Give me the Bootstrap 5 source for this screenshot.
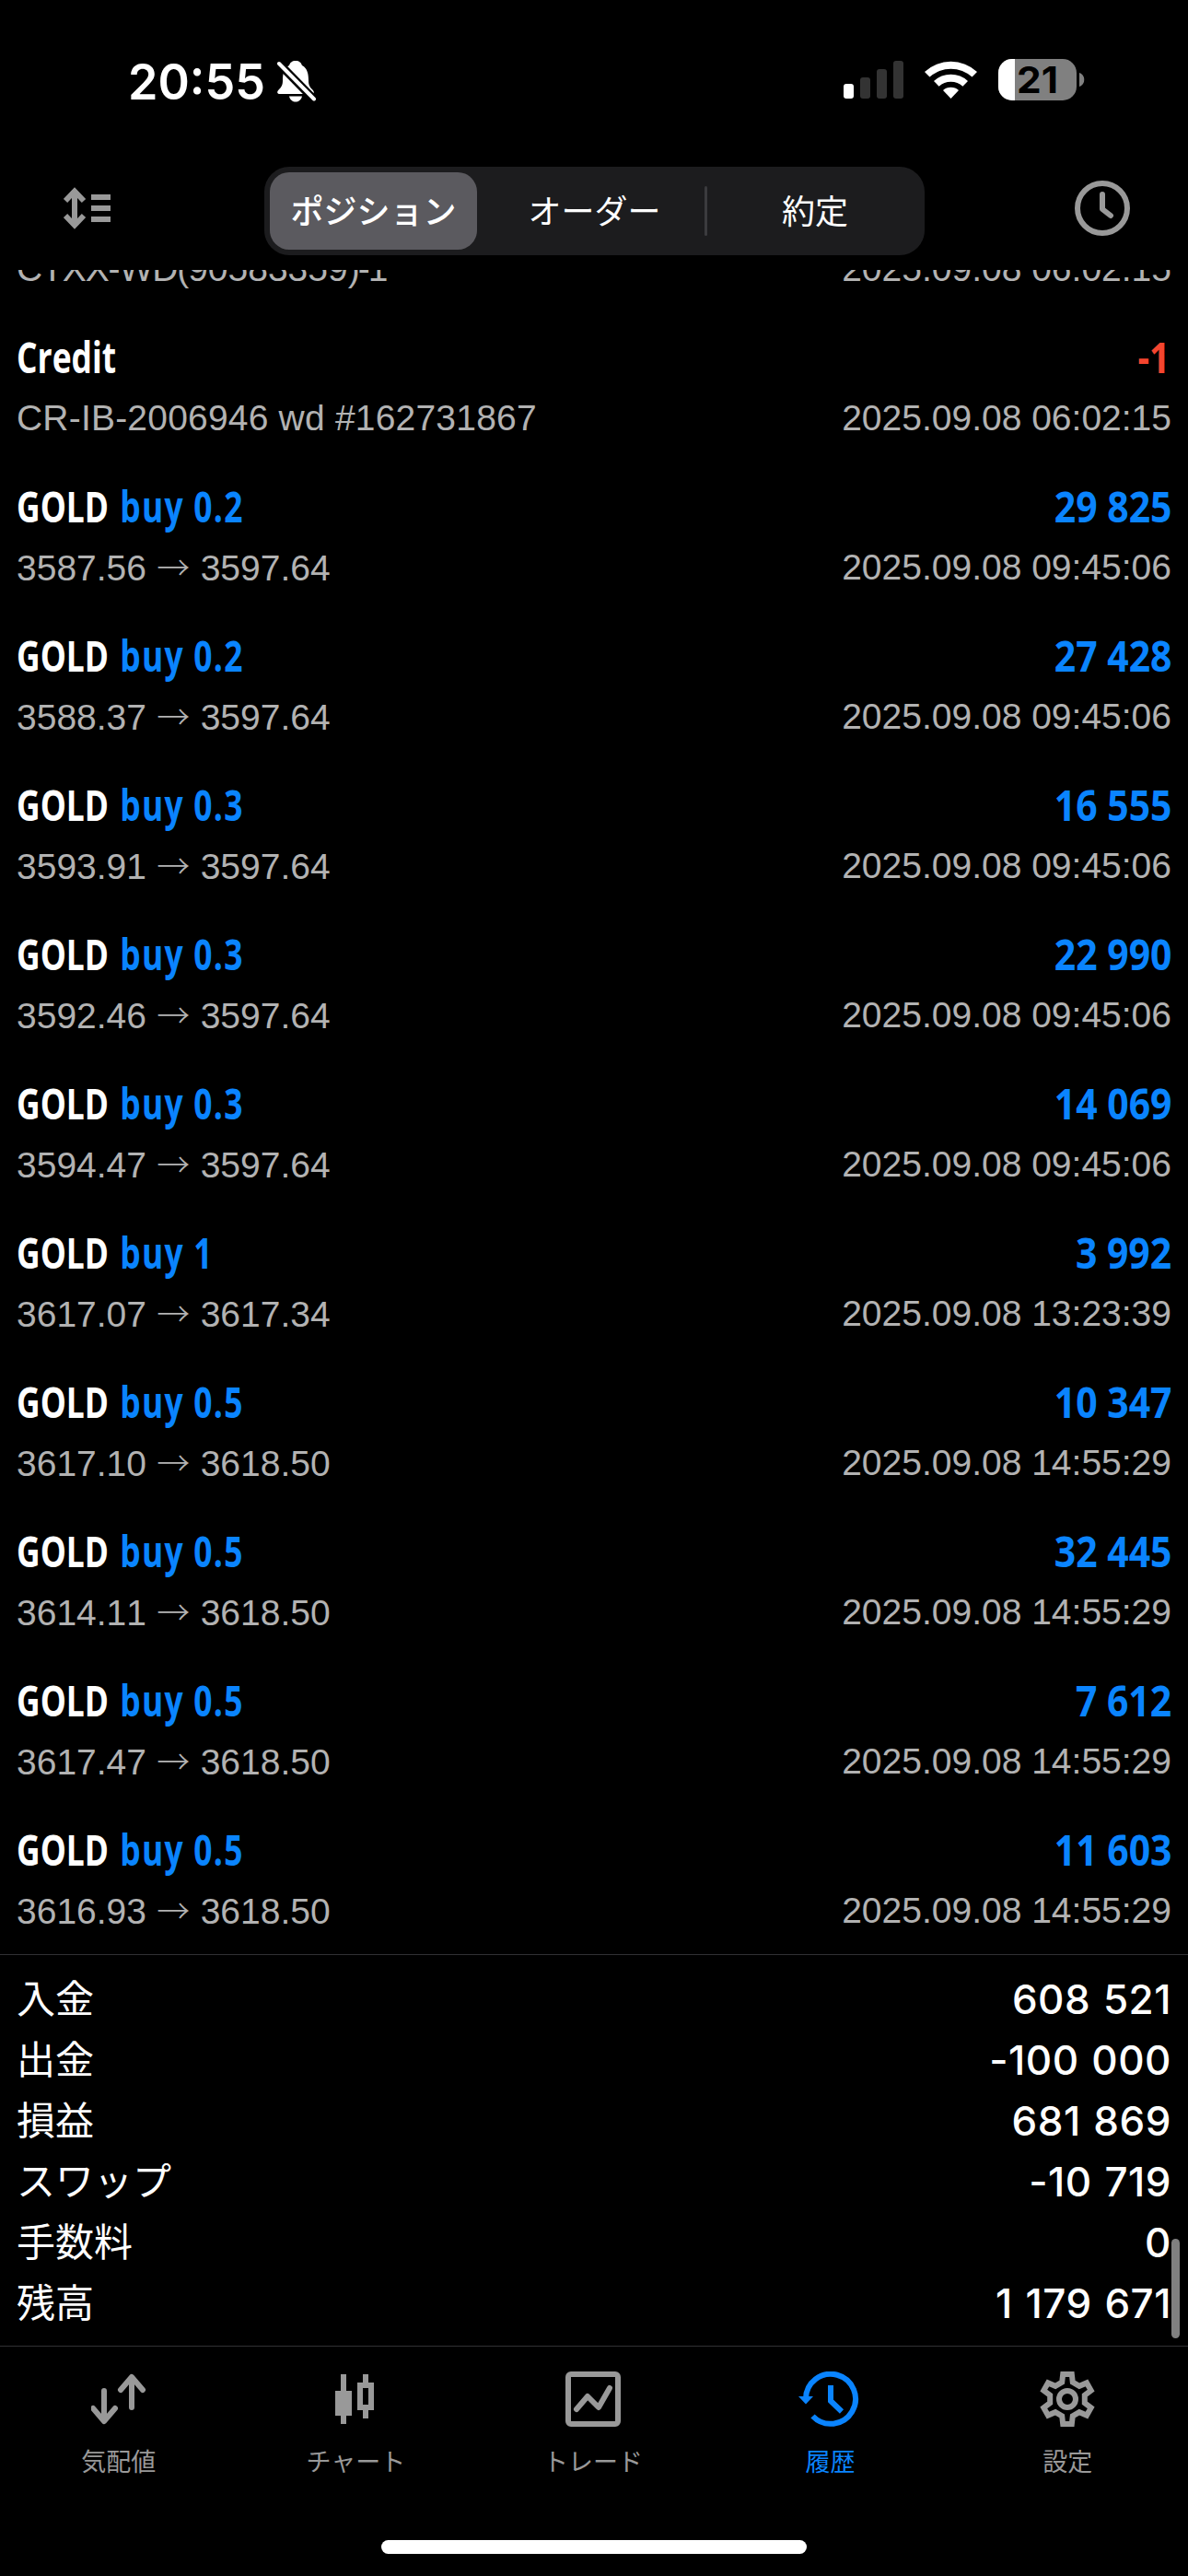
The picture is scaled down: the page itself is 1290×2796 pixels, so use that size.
<!DOCTYPE html>
<html lang="ja">
<head>
<meta charset="utf-8">
<meta name="viewport" content="width=device-width, initial-scale=1">
<title>履歴</title>
<link href="https://cdn.jsdelivr.net/npm/bootstrap@5.3.0/dist/css/bootstrap.min.css" rel="stylesheet">
<style>
  html, body { background: #000; }
  body { font-family: Inter, "Noto Sans CJK JP", sans-serif; color: #fff; line-height: 1; }
  svg { display: block; flex: none; }
  .screen { width: 1290px; height: 2796px; background: #000; overflow: hidden; }
  .status-bar { height: 181px; padding: 64px 112px 0 139px; }
  .clock-text { font-size: 54px; font-weight: 600; line-height: 49px; width: 162px; white-space: nowrap; }
  .clock-text span { display: inline-block; transform: scaleX(.965); transform-origin: left; }
  .toolbar { height: 112px; padding: 0 63px 0 69px; color: #999; }
  .sort-icon { margin-top: 22px; }
  .segments { width: 717px; height: 96px; padding: 6px; border-radius: 27px; background: #1c1c1e; margin-left: 3px; }
  .seg { width: 230px; height: 84px; flex: none; font-size: 36px; border-radius: 21px; color: #fff; line-height: 86px; padding-left: 4px; }
  .seg.wide { width: 241px; padding-left: 2px; }
  .seg.chosen { width: 225px; background: #5b5a5f; font-weight: 500; margin-right: 6px; padding-left: 0; }
  .seg-line { width: 3px; height: 54px; flex: none; background: #3b3b3e; border-radius: 2px; }
  .history { height: 1828px; }
  .deal { height: 162px; flex: none; padding: 0 18px 0 18px; }
  .deal-top { height: 93px; padding-top: 18px; font: 700 46px/60px "Open Sans", sans-serif; }
  .sym { transform: scaleX(.77); transform-origin: left; white-space: pre; }
  .side { margin-left: 4px; letter-spacing: 1.6px; }
  .amt { transform: scaleX(.89); transform-origin: right; white-space: pre; }
  .amt.red { transform: scaleX(.85); padding-right: 2px; }
  .deal-sub { font: 39px/44px "Liberation Sans", "Noto Sans CJK JP", sans-serif; color: #b2b2b2; font-kerning: none; }
  .note-long { letter-spacing: .2px; }
  .tight { letter-spacing: -1.1px; }
  .tight-end { letter-spacing: -2px; }
  .arr { display: inline-block; width: 37px; font: 300 36px/40px "Noto Sans CJK JP", sans-serif; text-align: center; }
  .blue { color: #0a84ff; }
  .red { color: #f5452f; }
  .totals { height: 425px; border-top: 1px solid #303033; padding: 15px 18px 0 18px; }
  .total { height: 66px; font-size: 42px; }
  .total b { font-weight: 500; font-size: 44px; white-space: pre; letter-spacing: .5px; word-spacing: 1.5px; }
  .scroll-thumb { right: 9px; top: 308px; width: 9px; height: 108px; border-radius: 5px; background: #808080; }
  .tabs { height: 211px; border-top: 1px solid #303033; color: #999; padding: 27px 2px 0 0; }
  .tab-cell { gap: 25px; font-size: 27px; }
  .home { width: 462px; height: 15px; border-radius: 8px; background: #fff; }
</style>
</head>
<body>
<div class="screen d-flex flex-column">
  <header class="status-bar d-flex justify-content-between align-items-start">
    <div class="d-flex">
      <div class="clock-text"><span>20:55</span></div>
      <svg width="42" height="48" viewBox="301 64 42 48">
        <path fill="#fff" d="M321 66c-4 0-6 2-7 5-6 3-7 10-7 16 0 5-1 7-4 10-3 3-2 5 1 5h34c3 0 4-2 1-5-3-3-4-5-4-10 0-6-1-13-7-16-1-3-3-5-7-5zM314 104.500h14c-1 4-4 6-7 6s-6-2-7-6z"/>
        <path stroke="#000" stroke-width="9" d="M299 65l44 45"/>
        <path stroke="#fff" stroke-width="4" stroke-linecap="round" d="M303 69l38 38.500"/>
      </svg>
    </div>
    <svg width="262" height="48" viewBox="916 64 262 48">
      <rect x="916" y="91" width="11" height="16" rx="3" fill="#fff"/>
      <g fill="#333"><rect x="934" y="84" width="11" height="23" rx="3"/><rect x="952" y="75" width="11" height="32" rx="3"/><rect x="970" y="66" width="11" height="41" rx="3"/></g>
      <g fill="#fff">
        <path d="M1004 78a42 42 0 0 1 57 0l-5.500 5.600a34 34 0 0 0-46 0z"/>
        <path d="M1014 88a27 27 0 0 1 37 0l-5.600 5.700a19 19 0 0 0-25.800 0z"/>
        <path d="M1024 98a13 13 0 0 1 17 0l-8.500 9z"/>
      </g>
      <clipPath id="cell"><rect x="1084" y="64" width="85" height="45" rx="15"/></clipPath>
      <g clip-path="url(#cell)"><path fill="#808080" d="M1084 64h86v45h-86z"/><path fill="#fff" d="M1084 64h18v45h-18z"/></g>
      <path fill="#808080" d="M1172 79c7 2 7 13 0 15z"/>
      <text x="1126.500" y="101" text-anchor="middle" font-family="Inter" font-size="40" font-weight="700" textLength="45" lengthAdjust="spacingAndGlyphs">21</text>
    </svg>
  </header>

  <div class="toolbar d-flex justify-content-between align-items-start">
    <svg class="sort-icon" width="52" height="46" viewBox="69 203 52 46" fill="none" stroke="#999" stroke-width="6">
      <path d="M81 207v38M71 218l10-10.500L91 218M71 234l10 10.500L91 234M99 214h21M99 226h21M99 238h21"/>
    </svg>
    <div class="segments d-flex align-items-center text-center">
      <div class="seg chosen">ポジション</div>
      <div class="seg wide">オーダー</div>
      <div class="seg-line"></div>
      <div class="seg">約定</div>
    </div>
    <svg width="60" height="90" viewBox="1167 181 60 90" fill="none" stroke="#999" stroke-width="6" stroke-linecap="round" stroke-linejoin="round">
      <circle cx="1197" cy="226" r="27"/><path d="M1197 211v16l9 7"/>
    </svg>
  </div>

  <main class="history d-flex flex-column justify-content-end overflow-hidden" id="deals"></main>

  <section class="totals position-relative" id="totals">
    <div class="scroll-thumb position-absolute"></div>
  </section>

  <nav class="tabs d-flex align-items-start">
    <div class="tab-cell col d-flex flex-column align-items-center">
      <svg width="60" height="60" viewBox="99 2574 60 60" fill="none" stroke="#999" stroke-width="6" stroke-linecap="round" stroke-linejoin="round"><path d="M113 2595v32M101 2614l12 14 12-14M143 2613v-31M131 2594l12-14 12 14"/></svg>
      <span>気配値</span>
    </div>
    <div class="tab-cell col d-flex flex-column align-items-center">
      <svg width="60" height="60" viewBox="357 2574 60 60"><path fill="#999" fill-rule="evenodd" d="M371 2577h6v18h6v27h-6v9h-6v-9h-6v-27h6zM395 2577h6v9h6v30h-6v9h-6v-9h-6v-30h6zM395 2592v18h6v-18z"/></svg>
      <span>チャート</span>
    </div>
    <div class="tab-cell col d-flex flex-column align-items-center">
      <svg width="60" height="60" viewBox="614 2574 60 60" fill="none" stroke="#999" stroke-width="6" stroke-linecap="round" stroke-linejoin="round"><rect x="617" y="2577" width="54" height="54" rx="3"/><path d="M626 2615l12-14 12 12 12-21"/></svg>
      <span>トレード</span>
    </div>
    <div class="tab-cell col d-flex flex-column align-items-center blue">
      <svg width="72" height="60" viewBox="866 2574 72 60" fill="none" stroke="#0a84ff" stroke-width="6"><path d="M882.500 2622.500A27 27 0 1 0 875 2604M902 2589v17l12 11.500"/><path fill="#0a84ff" stroke="none" d="M867 2601h16l-8 8.500z"/></svg>
      <span>履歴</span>
    </div>
    <div class="tab-cell col d-flex flex-column align-items-center">
      <svg width="60" height="60" viewBox="-30 -30 60 60" fill="none" stroke="#999" stroke-width="6"><circle r="9"/><path id="gear"/></svg>
      <span>設定</span>
    </div>
  </nav>
  <div class="home mx-auto"></div>
</div>

<script src="https://cdn.jsdelivr.net/npm/bootstrap@5.3.0/dist/js/bootstrap.bundle.min.js"></script>
<script>
  const day = '2025.09.08 ';
  const rows = [
    ['', '', '', '<span class="tight">CTXX-WD(</span>90583359<span class="tight-end">)-</span>1', '06:02:15'],
    ['Credit', '', '-1', '<span class="note-long">CR-IB-2006946 wd #162731867</span>', '06:02:15'],
    ['GOLD', 'buy 0.2', '29 825', '3587.56 → 3597.64', '09:45:06'],
    ['GOLD', 'buy 0.2', '27 428', '3588.37 → 3597.64', '09:45:06'],
    ['GOLD', 'buy 0.3', '16 555', '3593.91 → 3597.64', '09:45:06'],
    ['GOLD', 'buy 0.3', '22 990', '3592.46 → 3597.64', '09:45:06'],
    ['GOLD', 'buy 0.3', '14 069', '3594.47 → 3597.64', '09:45:06'],
    ['GOLD', 'buy 1', '3 992', '3617.07 → 3617.34', '13:23:39'],
    ['GOLD', 'buy 0.5', '10 347', '3617.10 → 3618.50', '14:55:29'],
    ['GOLD', 'buy 0.5', '32 445', '3614.11 → 3618.50', '14:55:29'],
    ['GOLD', 'buy 0.5', '7 612', '3617.47 → 3618.50', '14:55:29'],
    ['GOLD', 'buy 0.5', '11 603', '3616.93 → 3618.50', '14:55:29']
  ];
  document.getElementById('deals').innerHTML = rows.map(([s, side, amt, note, time]) => `
    <div class="deal">
      <div class="deal-top d-flex justify-content-between">
        <div class="sym">${s}${side ? ` <span class="side blue">${side}</span>` : ''}</div>
        <div class="amt ${amt[0] === '-' ? 'red' : 'blue'}">${amt}</div>
      </div>
      <div class="deal-sub d-flex justify-content-between">
        <div>${note.replace('→', '<span class="arr">→</span>')}</div><div>${day}${time}</div>
      </div>
    </div>`).join('');

  const sums = [['入金', '608 521'], ['出金', '-100 000'], ['損益', '681 869'], ['スワップ', '-10 719'], ['手数料', '0'], ['残高', '1 179 671']];
  document.getElementById('totals').insertAdjacentHTML('afterbegin', sums.map(([k, v]) =>
    `<div class="total d-flex justify-content-between align-items-center"><span>${k}</span><b>${v}</b></div>`).join(''));

  // six-tooth gear outline
  const pts = [];
  for (let i = 0; i < 6; i++) {
    for (const [deg, r] of [[-17.5, 19.3], [-10, 27.4], [10, 27.4], [17.5, 19.3]]) {
      const a = (i * 60 + deg - 90) * Math.PI / 180;
      pts.push((r * Math.cos(a)).toFixed(1) + ' ' + (r * Math.sin(a)).toFixed(1));
    }
  }
  document.getElementById('gear').setAttribute('d', 'M' + pts.join('L') + 'Z');
</script>
</body>
</html>
